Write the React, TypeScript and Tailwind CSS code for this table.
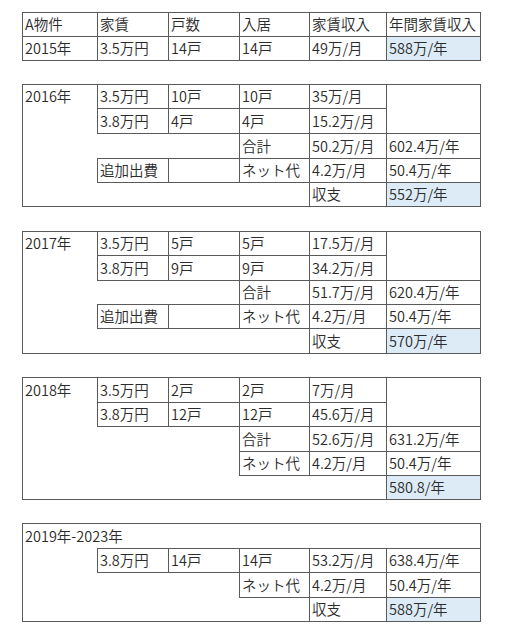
import React from "react";

const base = "-ml-px -mt-px flex items-center pl-[2px] whitespace-nowrap overflow-hidden leading-none";
const bd = base + " border border-[#5a5a5a]";
const nb = base + " border border-transparent";

function Cell({ pos, children, blue, plain }: { pos: string; children?: React.ReactNode; blue?: boolean; plain?: boolean }) {
  return <div className={`${plain ? nb : bd} ${blue ? "bg-[#ddebf7]" : ""} ${pos}`}>{children}</div>;
}

function Frame() {
  return <div className="col-span-full row-span-full -ml-px -mt-px border border-[#5a5a5a]" />;
}

const cols = "grid grid-cols-[75px_71px_71px_70px_77px_94px]";

function YearBlock({
  rows,
  year,
  r1,
  r2,
  sum,
  extra,
  net,
  total,
  shushi,
}: {
  rows: string;
  year: string;
  r1: [string, string, string, string];
  r2: [string, string, string, string];
  sum: [string, string];
  extra: boolean;
  net: [string, string];
  total: string;
  shushi: boolean;
}) {
  return (
    <div className={`${cols} ${rows}`}>
      <Frame />
      <Cell plain pos="col-start-1 row-start-1">{year}</Cell>
      <Cell pos="col-start-2 row-start-1">{r1[0]}</Cell>
      <Cell pos="col-start-3 row-start-1">{r1[1]}</Cell>
      <Cell pos="col-start-4 row-start-1">{r1[2]}</Cell>
      <Cell pos="col-start-5 row-start-1">{r1[3]}</Cell>
      <Cell pos="col-start-6 row-start-1 row-end-3" />
      <Cell pos="col-start-2 row-start-2">{r2[0]}</Cell>
      <Cell pos="col-start-3 row-start-2">{r2[1]}</Cell>
      <Cell pos="col-start-4 row-start-2">{r2[2]}</Cell>
      <Cell pos="col-start-5 row-start-2">{r2[3]}</Cell>
      <Cell pos="col-start-4 row-start-3">合計</Cell>
      <Cell pos="col-start-5 row-start-3">{sum[0]}</Cell>
      <Cell pos="col-start-6 row-start-3">{sum[1]}</Cell>
      {extra && <Cell pos="col-start-2 row-start-4">追加出費</Cell>}
      {extra && <Cell pos="col-start-3 row-start-4" />}
      <Cell pos="col-start-4 row-start-4">ネット代</Cell>
      <Cell pos="col-start-5 row-start-4">{net[0]}</Cell>
      <Cell pos="col-start-6 row-start-4">{net[1]}</Cell>
      {shushi && <Cell pos="col-start-5 row-start-5">収支</Cell>}
      <Cell blue pos="col-start-6 row-start-5">{total}</Cell>
    </div>
  );
}

export default function App() {
  return (
    <div
      className="bg-white w-[508px] h-[636px] pt-[13px] pl-[23px] text-[14.5px] font-[350] text-[#2b2b2b]"
      style={{ fontFamily: '"Noto Sans CJK JP", "Noto Sans", sans-serif' }}
    >
      <div className="flex flex-col">
        {/* 2015 */}
        <div className={`${cols} grid-rows-[24px_24px]`}>
          <Cell pos="col-start-1 row-start-1">A物件</Cell>
          <Cell pos="col-start-2 row-start-1">家賃</Cell>
          <Cell pos="col-start-3 row-start-1">戸数</Cell>
          <Cell pos="col-start-4 row-start-1">入居</Cell>
          <Cell pos="col-start-5 row-start-1">家賃収入</Cell>
          <Cell pos="col-start-6 row-start-1">年間家賃収入</Cell>
          <Cell pos="col-start-1 row-start-2">2015年</Cell>
          <Cell pos="col-start-2 row-start-2">3.5万円</Cell>
          <Cell pos="col-start-3 row-start-2">14戸</Cell>
          <Cell pos="col-start-4 row-start-2">14戸</Cell>
          <Cell pos="col-start-5 row-start-2">49万/月</Cell>
          <Cell blue pos="col-start-6 row-start-2">588万/年</Cell>
        </div>

        <div className="mt-[24px]">
          <YearBlock
            rows="grid-rows-[24px_25px_25px_24px_24px]"
            year="2016年"
            r1={["3.5万円", "10戸", "10戸", "35万/月"]}
            r2={["3.8万円", "4戸", "4戸", "15.2万/月"]}
            sum={["50.2万/月", "602.4万/年"]}
            extra
            net={["4.2万/月", "50.4万/年"]}
            total="552万/年"
            shushi
          />
        </div>

        <div className="mt-[25px]">
          <YearBlock
            rows="grid-rows-[24px_25px_24px_24px_25px]"
            year="2017年"
            r1={["3.5万円", "5戸", "5戸", "17.5万/月"]}
            r2={["3.8万円", "9戸", "9戸", "34.2万/月"]}
            sum={["51.7万/月", "620.4万/年"]}
            extra
            net={["4.2万/月", "50.4万/年"]}
            total="570万/年"
            shushi
          />
        </div>

        <div className="mt-[24px]">
          <YearBlock
            rows="grid-rows-[25px_24px_25px_24px_24px]"
            year="2018年"
            r1={["3.5万円", "2戸", "2戸", "7万/月"]}
            r2={["3.8万円", "12戸", "12戸", "45.6万/月"]}
            sum={["52.6万/月", "631.2万/年"]}
            extra={false}
            net={["4.2万/月", "50.4万/年"]}
            total="580.8/年"
            shushi={false}
          />
        </div>

        {/* 2019-2023 */}
        <div className={`mt-[24px] ${cols} grid-rows-[25px_24px_25px_24px]`}>
          <Frame />
          <Cell plain pos="col-start-1 col-end-7 row-start-1">2019年-2023年</Cell>
          <Cell pos="col-start-2 row-start-2">3.8万円</Cell>
          <Cell pos="col-start-3 row-start-2">14戸</Cell>
          <Cell pos="col-start-4 row-start-2">14戸</Cell>
          <Cell pos="col-start-5 row-start-2">53.2万/月</Cell>
          <Cell pos="col-start-6 row-start-2">638.4万/年</Cell>
          <Cell pos="col-start-4 row-start-3">ネット代</Cell>
          <Cell pos="col-start-5 row-start-3">4.2万/月</Cell>
          <Cell pos="col-start-6 row-start-3">50.4万/年</Cell>
          <Cell pos="col-start-5 row-start-4">収支</Cell>
          <Cell blue pos="col-start-6 row-start-4">588万/年</Cell>
        </div>
      </div>
    </div>
  );
}
